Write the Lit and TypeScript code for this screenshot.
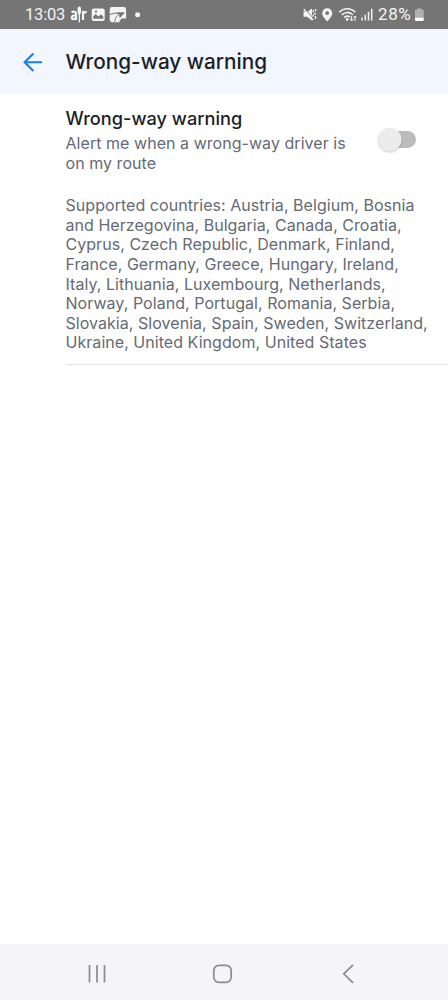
import { LitElement, html, css } from "lit";
import { customElement } from "lit/decorators.js";

const COUNTRY_LINES = [
  "Supported countries: Austria, Belgium, Bosnia",
  "and Herzegovina, Bulgaria, Canada, Croatia,",
  "Cyprus, Czech Republic, Denmark, Finland,",
  "France, Germany, Greece, Hungary, Ireland,",
  "Italy, Lithuania, Luxembourg, Netherlands,",
  "Norway, Poland, Portugal, Romania, Serbia,",
  "Slovakia, Slovenia, Spain, Sweden, Switzerland,",
  "Ukraine, United Kingdom, United States",
];

@customElement("status-bar")
class StatusBar extends LitElement {
  static styles = css`
    :host {
      display: flex;
      justify-content: space-between;
      height: 29px;
      box-sizing: border-box;
      padding: 0 23px 0 25px;
      background: #757575;
      color: #f4f4f4;
      font: 400 16.5px/30px Roboto, sans-serif;
    }
    .side { display: flex; align-items: flex-start; white-space: nowrap; }
    .time { width: 45px; letter-spacing: -0.2px; }
    .battery-text { width: 37px; font-size: 17px; line-height: 29px; letter-spacing: 0.6px; }
    svg { display: block; flex: none; }
  `;
  render() {
    return html`
      <div class="side">
        <span class="time">13:03</span>
        <svg width="75" height="29" viewBox="70 0 75 29" fill="none">
          <g stroke="#f4f4f4" stroke-width="2.2">
            <path d="M71.600 12.300c1.400-1 4.400-1.200 4.400 1.500v6.200M76 15.300c-2.400-.2-4.200.4-4.200 2.200 0 2.200 3.200 2.200 4.200.3" />
            <path d="M79.300 11v11.500" stroke-width="1.300" />
            <path d="M83 20v-9.200M83 14.500c.3-2 1.600-2.700 3.800-2.300" />
          </g>
          <path d="M79.300 6.500c1.300 0 1.700 1 1.700 2v3.500q0 2-1.700 3-1.700-1-1.700-3v-3.500c0-1 .4-2 1.700-2z" fill="#f4f4f4" />
          <rect x="91.700" y="8.500" width="13" height="12.600" rx="2" fill="#f4f4f4" />
          <path d="M93.200 18.800v-2.400l2.400-2.300 2.700 2.500 2.700-2.200 2.200 2.200v2.200z" fill="#757575" />
          <circle cx="96" cy="11.600" r="1.100" fill="#757575" />
          <path d="M112 7h11.700q2.400 0 2.400 2.400v9.200h-4.600l-2.500 3.600h-7q-2.300 0-2.300-2.400v-10.400q0-2.400 2.300-2.400z" fill="#f4f4f4" />
          <path d="M109.700 13.900c5-1.600 9.800-2 15.200-1.500l-5.200 5.800-.7-4.300c-2.800-.4-6-.2-9.300 1.200z" fill="#757575" />
          <path d="M118.800 14.400c-2.400 1.600-3.700 4-4.200 7.800" stroke="#757575" stroke-width="0.900" />
          <circle cx="137.600" cy="14.700" r="2.500" fill="#f4f4f4" />
        </svg>
      </div>
      <div class="side">
        <svg width="76" height="29" viewBox="301 0 76 29" fill="none">
          <path d="M302.500 12h3.500l5-3.500v12l-5-3.800h-3.500z" fill="#f4f4f4" />
          <path d="M304 8.500l9 10.700" stroke="#757575" stroke-width="1" />
          <path d="M302.800 9.300l9.200 10.700" stroke="#f4f4f4" stroke-width="1.500" />
          <path d="M312.200 10v2.300M312.200 14.500v2.300M314.500 9v2.300M314 12.500v2.500M314.500 16v3" stroke="#f4f4f4" stroke-width="1.300" />
          <path fill-rule="evenodd" d="M326.200 8.200a5.100 5.100 0 0 1 5.100 5.100c0 3.500-5.100 8.100-5.100 8.100s-5.100-4.600-5.100-8.100a5.100 5.100 0 0 1 5.100-5.100zm0 3a1.900 1.900 0 1 0 0 3.800 1.900 1.900 0 0 0 0-3.800z" fill="#f4f4f4" />
          <g stroke="#f4f4f4" stroke-width="1.600">
            <path d="M338.400 12.200c4.400-4.700 11.400-4.700 15.800 0" />
            <path d="M340.800 15c3.200-3.400 7.800-3.400 11-.2" />
            <path d="M343.200 17.600c1.900-1.900 4-1.900 5.800-.4" />
          </g>
          <circle cx="346.200" cy="19.400" r="1.400" fill="#f4f4f4" />
          <path d="M350.600 16v4.500M349 19l1.600 1.800 1.600-1.800M354 21v-4.800M352.500 17.700l1.500-1.700 1.500 1.700" stroke="#f4f4f4" stroke-width="1" />
          <path d="M361 17.500v3M364.300 14.800v5.700M367.500 11.800v8.700M370.700 8.800v11.700" stroke="#f4f4f4" stroke-width="1.500" />
        </svg>
        <span class="battery-text">28%</span>
        <svg width="10" height="29" viewBox="415 0 10 29">
          <path d="M417 8.500h4.500v1.300h1.200q1 0 1 1v8.700q0 1.500-1.500 1.500h-5.700q-1.500 0-1.500-1.500v-8.700q0-1 1-1h1z" fill="#b0b0b0" />
          <path d="M415 17.800h8.700v1.700q0 1.500-1.500 1.500h-5.700q-1.500 0-1.500-1.500z" fill="#fff" />
        </svg>
      </div>
    `;
  }
}

@customElement("toggle-switch")
class ToggleSwitch extends LitElement {
  static styles = css`
    :host { display: block; width: 39px; height: 26px; }
    svg { display: block; overflow: visible; }
    .thumb { filter: drop-shadow(0 1px 0.8px rgba(0, 0, 0, 0.22)); }
  `;
  render() {
    return html`
      <svg width="39" height="26" viewBox="0 0 39 26">
        <rect x="6" y="4" width="33" height="17" rx="8.500" fill="#bcbcbc" />
        <circle class="thumb" cx="12.900" cy="12.500" r="11.600" fill="#ececec" />
      </svg>
    `;
  }
}

@customElement("app-root")
class AppRoot extends LitElement {
  static styles = css`
    :host {
      display: flex;
      flex-direction: column;
      height: 1000px;
      background: #fff;
      color: #1c1f27;
      font-family: Inter, sans-serif;
    }
    header {
      display: flex;
      align-items: center;
      height: 65px;
      padding-left: 22px;
      background: #f1f6ff;
    }
    .back { display: block; width: 43.5px; flex: none; }
    h1, h2, p { margin: 0; white-space: nowrap; }
    h1 { font-size: 20.75px; line-height: 28px; font-weight: 500; }
    main { flex: 1; padding-left: 65.5px; }
    .setting { display: flex; padding-top: 12px; }
    .label { width: 311.5px; }
    h2 { font-size: 18.2px; line-height: 24px; font-weight: 500; }
    p { font-size: 16px; line-height: 19.55px; letter-spacing: 0.045px; color: #656a75; }
    .hint { padding-top: 4px; }
    toggle-switch { margin-top: 21px; }
    .countries { padding: 23.3px 0 11.3px; border-bottom: 1px solid #e3e3e3; }
    .line { display: block; }
    nav {
      display: flex;
      height: 56px;
      background: #f5f5f8;
    }
    nav svg { display: block; }
  `;
  render() {
    return html`
      <status-bar></status-bar>
      <header>
        <svg class="back" width="43.5" height="24" viewBox="0 0 43.5 24" fill="none" stroke="#1681ec" stroke-width="2.100">
          <path d="M20 12.200H3M11.400 3.400L2.600 12.200l8.800 8.800" />
        </svg>
        <h1>Wrong-way warning</h1>
      </header>
      <main>
        <section class="setting">
          <div class="label">
            <h2>Wrong-way warning</h2>
            <p class="hint">
              <span class="line">Alert me when a wrong-way driver is</span>
              <span class="line">on my route</span>
            </p>
          </div>
          <toggle-switch></toggle-switch>
        </section>
        <p class="countries">
          ${COUNTRY_LINES.map((line) => html`<span class="line">${line}</span>`)}
        </p>
      </main>
      <nav>
        <svg width="448" height="56" viewBox="0 944 448 56" fill="none" stroke="#8b8b8d" stroke-width="1.700">
          <path d="M89.500 965v17.500M97 965v17.500M104.500 965v17.500" />
          <rect x="213.800" y="965.300" width="17.400" height="17" rx="5.200" />
          <path d="M353 964.800l-9.200 9 9.200 9" />
        </svg>
      </nav>
    `;
  }
}
